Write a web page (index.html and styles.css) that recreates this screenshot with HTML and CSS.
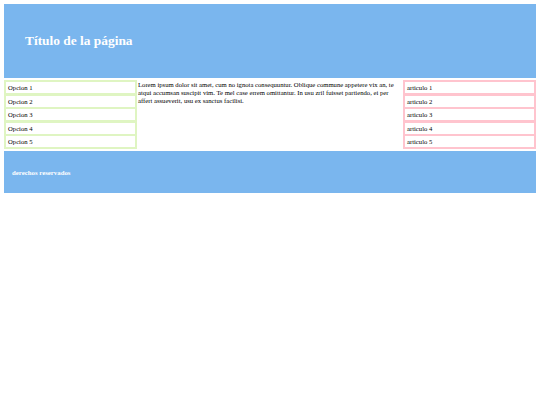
FILE: index.html
```html
<!DOCTYPE html>
<html lang="es">
<head>
<meta charset="utf-8">
<title>Título de la página</title>
<link rel="stylesheet" href="styles.css">
</head>
<body>
<header class="cabecera">
  <h1 class="titulo">Título de la página</h1>
</header>
<div class="contenido">
  <nav class="menu">
    <div class="opcion">Opcion 1</div>
    <div class="opcion">Opcion 2</div>
    <div class="opcion">Opcion 3</div>
    <div class="opcion">Opcion 4</div>
    <div class="opcion">Opcion 5</div>
  </nav>
  <main class="principal">
    <p class="texto">Lorem ipsum dolor sit amet, cum no ignota consequuntur. Oblique commune appetere vix an, te atqui accumsan suscipit vim. Te mel case errem omittantur. In usu zril fuisset partiendo, ei per affert assueverit, usu ex sanctus facilisi.</p>
  </main>
  <aside class="lateral">
    <div class="articulo">articulo 1</div>
    <div class="articulo">articulo 2</div>
    <div class="articulo">articulo 3</div>
    <div class="articulo">articulo 4</div>
    <div class="articulo">articulo 5</div>
  </aside>
</div>
<footer class="pie">
  <p class="derechos">derechos reservados</p>
</footer>
</body>
</html>
```
FILE: styles.css
```css
html, body {
  margin: 0;
  padding: 0;
  background: #ffffff;
}
body {
  margin: 4px;
  font-family: "Liberation Serif", "Times New Roman", serif;
  font-size: 6.67px;
  color: #000000;
}
.cabecera {
  background: #7ab6ee;
  height: 74px;
  display: flex;
  align-items: center;
  padding-left: 21px;
}
.titulo {
  margin: 0;
  color: #ffffff;
  font-size: 13.4px;
  font-weight: bold;
}
.contenido {
  display: flex;
  margin-top: 2px;
}
.menu, .lateral {
  width: 133px;
  box-sizing: border-box;
  padding: 2px;
  display: flex;
  flex-direction: column;
  gap: 2.5px;
}
.menu {
  background: #dff5c2;
}
.lateral {
  background: #ffc4ce;
}
.opcion, .articulo {
  background: #ffffff;
  height: 11px;
  line-height: 12.5px;
  padding-left: 2px;
}
.principal {
  width: 266px;
  box-sizing: border-box;
  padding: 0 4px 0 1px;
}
.texto {
  margin: 1px 0 0;
  line-height: 8px;
}
.pie {
  background: #7ab6ee;
  height: 42px;
  margin-top: 2px;
  display: flex;
  align-items: center;
  padding-left: 8px;
}
.derechos {
  margin: 0;
  color: #ffffff;
  font-weight: bold;
  font-size: 6.8px;
}
```
